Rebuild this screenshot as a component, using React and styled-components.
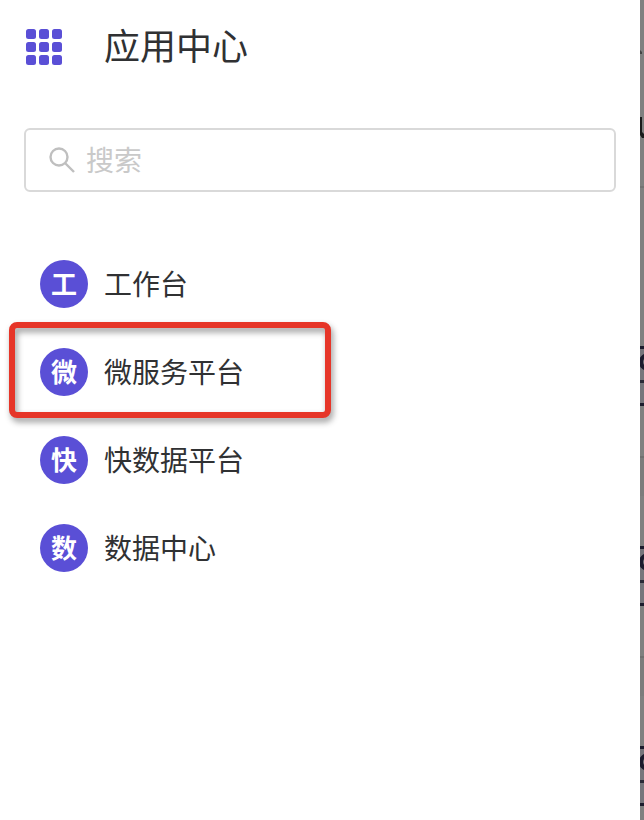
import React from "react";
import styled, { createGlobalStyle, css } from "styled-components";

const GlobalStyle = createGlobalStyle`
    *, *::after{
        box-sizing:border-box;
    }
    body{
        margin:0;
        background-color:#ffffff;
        color:#303133;
        font-family:"Noto Sans CJK SC", "Noto Sans", sans-serif;
    }
`;

const Container = styled.div`
    display:flex;
    width:100%;
    height:100vh;
    overflow:hidden;
`;
const Drawer = styled.main`
    flex:1;
    min-width:0;
    padding:24px;
    background-color:#ffffff;
`;

const Header = styled.header`
    display:flex;
    align-items:center;
    gap:40px;
    height:46px;
    margin-bottom:58px;
`;
const AppsIcon = styled.svg`
    width:40px;
    height:40px;
    flex:none;
    fill:#5a4fd6;
`;
const Title = styled.h1`
    margin:0;
    padding-bottom:6px;
    font-size:36px;
    line-height:40px;
    font-weight:400;
`;

const SearchBox = styled.label`
    display:flex;
    align-items:center;
    gap:10px;
    height:64px;
    padding:0 22px;
    border:2px solid #d9d9d9;
    border-radius:6px;
`;
const SearchIcon = styled.svg`
    width:28px;
    height:28px;
    flex:none;
    fill:none;
    stroke:#bfbfbf;
    stroke-width:2.4;
`;
const SearchInput = styled.input`
    flex:1;
    min-width:0;
    padding:0 0 2px;
    border:0;
    outline:0;
    background:none;
    color:inherit;
    font-family:inherit;
    font-size:28px;
    line-height:40px;
    &::placeholder{
        color:#c9c9c9;
        opacity:1;
    }
`;

const AppList = styled.ul`
    margin:48px 0 0;
    padding:0;
    list-style:none;
`;
const AppItem = styled.li`
    position:relative;
    height:88px;
    ${props => props.$marked && css`
        &::after{
            content:"";
            position:absolute;
            top:-6px;
            left:-15px;
            width:322px;
            height:96px;
            border:6px solid #e63528;
            border-radius:8px;
            filter:drop-shadow(2px 4px 3px rgba(0,0,0,0.4));
            pointer-events:none;
        }
    `}
`;
const AppLink = styled.a`
    display:flex;
    align-items:center;
    gap:16px;
    height:100%;
    padding:0 16px;
    color:inherit;
    text-decoration:none;
`;
const Badge = styled.span`
    width:48px;
    height:48px;
    border-radius:50%;
    background-color:#5a4fd6;
    color:#ffffff;
    font-size:26px;
    line-height:46px;
    font-weight:700;
    text-align:center;
`;
const AppName = styled.span`
    padding-bottom:2px;
    font-size:28px;
    line-height:40px;
`;

/* edge of the dimmed page that stays visible beside the drawer */
const Dimmed = styled.div`
    width:4px;
    flex:none;
    overflow:hidden;
    background-color:#808080;
`;
const Fragment = styled.svg`
    display:block;
    width:4px;
    height:${props => props.$height}px;
`;
const Card = styled.div`
    height:60px;
    border-top:3px solid #1c1b2d;
    border-bottom:3px solid #1c1b2d;
    background-color:#77767c;
`;
const CardHead = styled.div`
    height:34px;
    border-bottom:3px solid #2c2b38;
    padding-top:4px;
`;
const Shade = styled.div`
    height:40px;
    margin:50px 0;
    border-top:2px solid #707070;
    background-color:#7c7c7c;
`;

const apps = [
    { name: "工作台", short: "工" },
    { name: "微服务平台", short: "微", marked: true },
    { name: "快数据平台", short: "快" },
    { name: "数据中心", short: "数" }
];

const dots = [2, 15, 28];

const App = () => (
    <>
        <GlobalStyle />
        <Container>
            <Drawer>
                <Header>
                    <AppsIcon viewBox="0 0 40 40" aria-hidden="true">
                        {dots.map(y =>
                            dots.map(x =>
                                <rect key={`${x}-${y}`} x={x} y={y} width="10" height="10" rx="2.5" />
                            )
                        )}
                    </AppsIcon>
                    <Title>应用中心</Title>
                </Header>
                <SearchBox>
                    <SearchIcon viewBox="0 0 28 28" aria-hidden="true">
                        <circle cx="11" cy="11" r="8.5" />
                        <path d="M17 17L26 26" />
                    </SearchIcon>
                    <SearchInput type="text" placeholder="搜索" aria-label="搜索" />
                </SearchBox>
                <AppList>
                    {apps.map(app =>
                        <AppItem key={app.name} $marked={app.marked}>
                            <AppLink href="#">
                                <Badge>{app.short}</Badge>
                                <AppName>{app.name}</AppName>
                            </AppLink>
                        </AppItem>
                    )}
                </AppList>
            </Drawer>
            <Dimmed aria-hidden="true">
                <Fragment $height={346} viewBox="0 0 4 346">
                    <path d="M0 50L2 52V54H0Z" fill="#444444" />
                    <path d="M0 117H2V132L4 134V138H2L0 135Z" fill="#1b1b1b" />
                    <rect y="186" width="4" height="2" fill="#737373" />
                </Fragment>
                {[0, 1, 2].map(row =>
                    <React.Fragment key={row}>
                        <Card>
                            <CardHead>
                                <Fragment $height={20} viewBox="0 0 4 20">
                                    <circle cx="8" cy="9" r="7" fill="none" stroke="#1c1b2d" strokeWidth="4" />
                                </Fragment>
                            </CardHead>
                        </Card>
                        <Shade />
                    </React.Fragment>
                )}
            </Dimmed>
        </Container>
    </>
);

export default App;
